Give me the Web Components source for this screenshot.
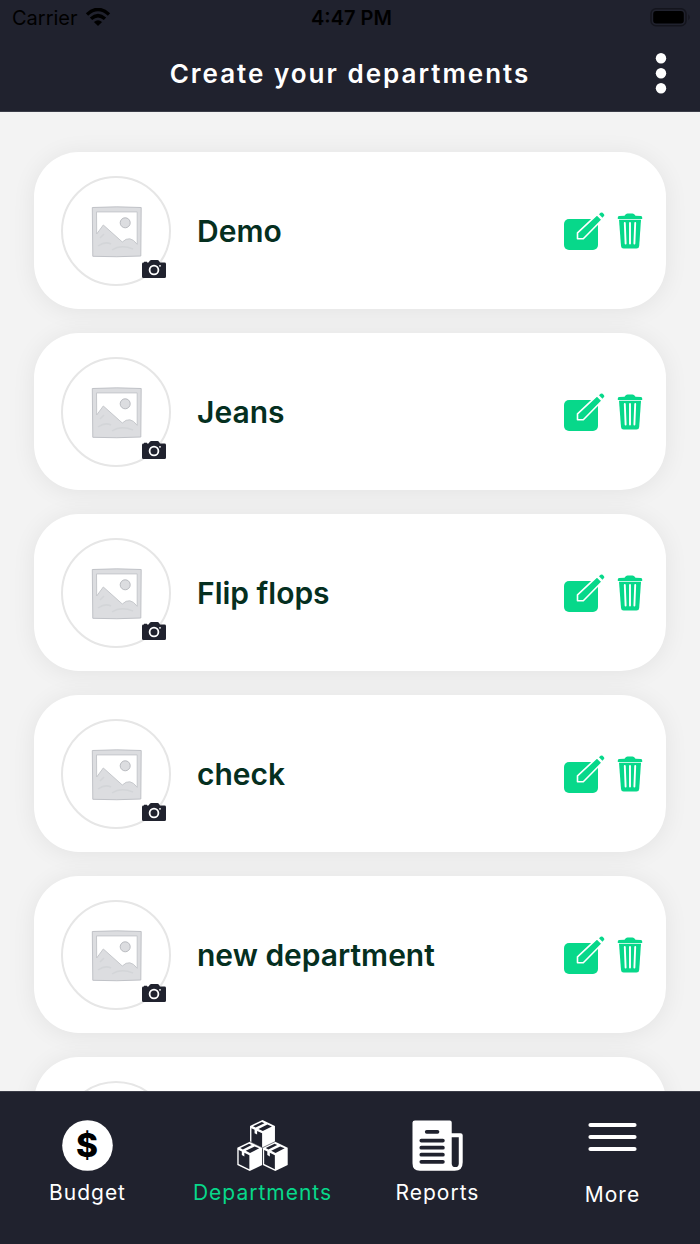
<!DOCTYPE html>
<html lang="en">
<head>
<meta charset="utf-8">
<meta name="viewport" content="width=device-width, initial-scale=1">
<title>Create your departments</title>
<style>
  html, body { height: 100%; margin: 0; }
  body {
    font-family: Inter, "Liberation Sans", sans-serif;
    --ink: #20222e;
    --accent: #07d88a;
    --name: #052f1f;
    --page: #f3f3f3;
  }
</style>
</head>
<body>
<app-screen>
  <status-bar slot="top" carrier="Carrier" time="4:47 PM"></status-bar>
  <title-bar slot="top">Create your departments</title-bar>
  <department-card>Demo</department-card>
  <department-card>Jeans</department-card>
  <department-card>Flip flops</department-card>
  <department-card>check</department-card>
  <department-card>new department</department-card>
  <department-card></department-card>
  <tab-bar slot="bottom">
    <tab-item href="#budget">
      <svg slot="icon" width="51" height="51" viewBox="0 0 52 52" aria-hidden="true">
        <circle cx="26" cy="26" r="25.800" fill="#fff"/>
        <text x="26" y="38" text-anchor="middle" font-size="34" font-weight="800" fill="#000">$</text>
      </svg>
      Budget
    </tab-item>
    <tab-item href="#departments" current>
      <svg slot="icon" width="51" height="51" viewBox="0 0 52 52" aria-hidden="true">
        <defs>
          <g id="box">
            <path d="M13 0L25.700 6V23.500L13 29.700L.3 23.500V6Z" fill="#fff"/>
            <path d="M1.700 8.300L4.900 9.900V13.400L7.500 14.800V11.200L12.600 13.600V28L1.700 22.600Z" fill="#20222e"/>
            <path d="M3.300 6.300L12.300 2L15 3.200L6 7.700Z M8.900 9.100L18 4.600L22.600 6.600L13.300 11.300Z" fill="#20222e"/>
          </g>
        </defs>
        <use href="#box" x="13" y="0"/>
        <use href="#box" x="0" y="22.300"/>
        <use href="#box" x="26" y="22.300"/>
        <path d="M13 22L26 28.300L39 22M26 28.300V46" fill="none" stroke="#20222e" stroke-width="0.600"/>
      </svg>
      Departments
    </tab-item>
    <tab-item href="#reports">
      <svg slot="icon" width="51" height="51" viewBox="0 0 52 52" aria-hidden="true">
        <path d="M3 .5H38.500Q40.500 .5 40.500 2.500V13.500H49.500Q51.700 13.500 51.700 15.500V43Q51.700 51.700 43.500 51.700H8Q.5 51.700 .5 44V2.500Q.5 .5 3 .5Z" fill="#fff"/>
        <path d="M40.500 17.500H47.700V44Q47.700 48 44.200 48Q40.500 48 40.500 44Z" fill="#20222e"/>
        <path d="M15 12H26M9.500 21H31.500M9.500 28.200H31.500M9.500 35.400H31.500M9.500 42.600H31.500" stroke="#20222e" stroke-width="3.800" stroke-linecap="round"/>
      </svg>
      Reports
    </tab-item>
    <tab-item href="#more" roomy>
      <svg slot="icon" width="51" height="51" viewBox="0 0 51 51" aria-hidden="true">
        <path d="M3.500 5H47.500M3.500 17H47.500M3.500 29H47.500" stroke="#fff" stroke-width="4.200" stroke-linecap="round"/>
      </svg>
      More
    </tab-item>
  </tab-bar>
</app-screen>

<script>
  const define = (name, html, setup) => {
    const template = document.createElement('template');
    template.innerHTML = html;
    customElements.define(name, class extends HTMLElement {
      connectedCallback() {
        if (this.shadowRoot) return;
        const root = this.attachShadow({ mode: 'open' });
        root.append(template.content.cloneNode(true));
        if (setup) setup(this, root);
      }
    });
  };

  define('app-screen', `
    <style>
      :host { display: flex; flex-direction: column; height: 100vh; background: var(--page); }
      header { flex: none; background: var(--ink); border-bottom: 1px solid #3b3d48; }
      main {
        flex: 1; min-height: 0; overflow-y: auto; scrollbar-width: none;
        display: flex; flex-direction: column; gap: 24px;
        padding: 40px 34px; box-sizing: border-box;
      }
    </style>
    <header><slot name="top"></slot></header>
    <main><slot></slot></main>
    <slot name="bottom"></slot>`);

  define('status-bar', `
    <style>
      :host {
        display: grid; grid-template-columns: 1fr auto 1fr; align-items: center;
        height: 36px; padding: 0 9px 0 12px; color: #000; font-size: 20px;
      }
      .left { display: flex; align-items: center; gap: 7px; }
      .time { font-weight: 600; }
      .battery { justify-self: end; }
      svg { display: block; }
    </style>
    <div class="left">
      <span class="carrier"></span>
      <svg width="26" height="20" viewBox="0 0 26 20" aria-hidden="true">
        <path d="M2 6.400Q13-3.600 24 6.400M6 10.800Q13 4.400 20 10.800" fill="none" stroke="#000" stroke-width="3.400"/>
        <path d="M13 18L8.900 14Q13 10.400 17.100 14Z"/>
      </svg>
    </div>
    <span class="time"></span>
    <svg class="battery" width="41" height="20" viewBox="0 0 41 20" aria-hidden="true">
      <rect x="1" y=".8" width="35" height="17" rx="5" fill="none" stroke="#14151d" stroke-width="1.500"/>
      <rect x="3.200" y="3" width="30.600" height="12.600" rx="3" fill="#000"/>
      <path d="M38.400 6.300Q41 9.300 38.400 12.300Z" fill="#14151d"/>
    </svg>`, (host, root) => {
      root.querySelector('.carrier').textContent = host.getAttribute('carrier');
      root.querySelector('.time').textContent = host.getAttribute('time');
    });

  define('title-bar', `
    <style>
      :host {
        display: grid; grid-template-columns: 48px 1fr 48px; align-items: center;
        height: 75px; padding: 0 15px; color: #fff;
      }
      h1 { grid-column: 2; margin: 0; text-align: center; font-size: 26px; font-weight: 600; letter-spacing: 2px; white-space: nowrap; }
      button { display: grid; place-items: center; padding: 0; border: 0; background: none; height: 48px; }
    </style>
    <h1><slot></slot></h1>
    <button type="button" aria-label="Options">
      <svg width="12" height="42" viewBox="0 0 12 42" fill="#fff" aria-hidden="true">
        <circle cx="6" cy="5.200" r="5.200"/><circle cx="6" cy="20.200" r="5.200"/><circle cx="6" cy="35.200" r="5.200"/>
      </svg>
    </button>`);

  define('department-card', `
    <style>
      :host {
        flex: none; display: flex; align-items: center; box-sizing: border-box;
        height: 157px; padding: 0 23px 0 27px; border-radius: 45px;
        background: #fff; box-shadow: 0 2px 24px rgba(0, 0, 0, .07);
      }
      .photo { position: relative; flex: none; display: grid; place-items: center; width: 110px; height: 110px; box-sizing: border-box; border: 2px solid #e6e6e6; border-radius: 50%; }
      button { display: block; padding: 0; border: 0; background: none; }
      .camera { position: absolute; right: 3px; bottom: 6px; }
      svg { display: block; }
      h2 { flex: 1; margin: 0 26px; color: var(--name); font-size: 30px; font-weight: 600; }
      .actions { display: flex; align-items: center; gap: 12px; }
    </style>
    <div class="photo">
      <svg width="54" height="54" viewBox="-3 -3 54 54" aria-hidden="true">
        <path d="M.3 .5Q25-.8 49.200 .5L48.800 49Q25 50.300 .8 49.300Z" fill="#dcdde0" stroke="#c0c2c7" stroke-width="1"/>
        <path d="M4.500 4.900H45.200V37.300Q38 27.500 30.300 35L11.300 18L4.700 27Z" fill="#fff" stroke="#c6c8cc" stroke-width="1"/>
        <circle cx="33.200" cy="15.800" r="5" fill="#dcdde0" stroke="#b9bbc0" stroke-width="1"/>
        <path d="M6 39Q13 34 19 37M20 43Q29 37 41 42M8 31L12 27" fill="none" stroke="#d3d5d8" stroke-width="1.500"/>
      </svg>
      <button class="camera" type="button" aria-label="Change photo">
        <svg width="24" height="18" viewBox="0 0 24 18" aria-hidden="true">
          <path d="M1.500 2.600H2V1.800H5V2.600H6.500L8 .6Q8.500 0 9.300 0H15.500Q16.400 0 16.900 .7L18 2.600H22.500Q24 2.600 24 4V16.500Q24 18 22.500 18H1.500Q0 18 0 16.500V4Q0 2.600 1.500 2.600Z" fill="#20222e"/>
          <circle cx="12" cy="10" r="4.400" fill="none" stroke="#fff" stroke-width="1.800"/>
          <circle cx="18" cy="5.800" r=".9" fill="#fff"/>
        </svg>
      </button>
    </div>
    <h2><slot></slot></h2>
    <div class="actions">
      <button type="button" aria-label="Edit department">
        <svg width="42" height="38" viewBox="0 0 42 38" fill="#07d88a" aria-hidden="true">
          <rect x="1" y="7" width="34" height="31" rx="5"/>
          <path d="M34 2.700L39 7.700L20.300 26.700H14.500V20.900Z" stroke="#fff" stroke-width="1.600" stroke-linejoin="round"/>
          <path d="M36 2.300L37.600 .8Q38.600 0 39.600 .8L41 2.200Q41.700 3.200 41 4.100L39.400 5.700Z"/>
        </svg>
      </button>
      <button type="button" aria-label="Delete department">
        <svg width="26" height="38" viewBox="0 0 26 38" aria-hidden="true">
          <path d="M.8 6.900V5.500Q.8 4.300 2 4.100L7.500 3.700Q9 1.500 10.500 1.500H15.500Q17 1.500 18.500 3.700L24 4.100Q25.200 4.300 25.200 5.500V6.900Z" fill="#07d88a"/>
          <path d="M2 7.700H24L22.200 34Q22 36.500 19.500 36.500H6.500Q4.200 36.500 4 34Z" fill="#07d88a"/>
          <path d="M7.800 11L8.600 31.500M13 11V31.500M18.200 11L17.400 31.500" stroke="#fff" stroke-width="1.900" stroke-linecap="round"/>
        </svg>
      </button>
    </div>`);

  define('tab-bar', `
    <style>
      :host { flex: none; display: block; background: var(--ink); border-top: 1px solid #3b3d48; }
      nav { display: grid; grid-template-columns: repeat(4, 1fr); height: 152px; }
    </style>
    <nav><slot></slot></nav>`);

  define('tab-item', `
    <style>
      :host { display: block; }
      a { display: flex; flex-direction: column; align-items: center; padding-top: 28px; gap: 8px; color: #fff; text-decoration: none; font-size: 21px; line-height: 28px; letter-spacing: 1px; }
      :host([current]) a { color: var(--accent); }
      :host([roomy]) a { gap: 10px; }
    </style>
    <a><slot name="icon"></slot><span><slot></slot></span></a>`, (host, root) => {
      const link = root.querySelector('a');
      link.href = host.getAttribute('href');
      if (host.hasAttribute('current')) link.setAttribute('aria-current', 'page');
    });
</script>
</body>
</html>
